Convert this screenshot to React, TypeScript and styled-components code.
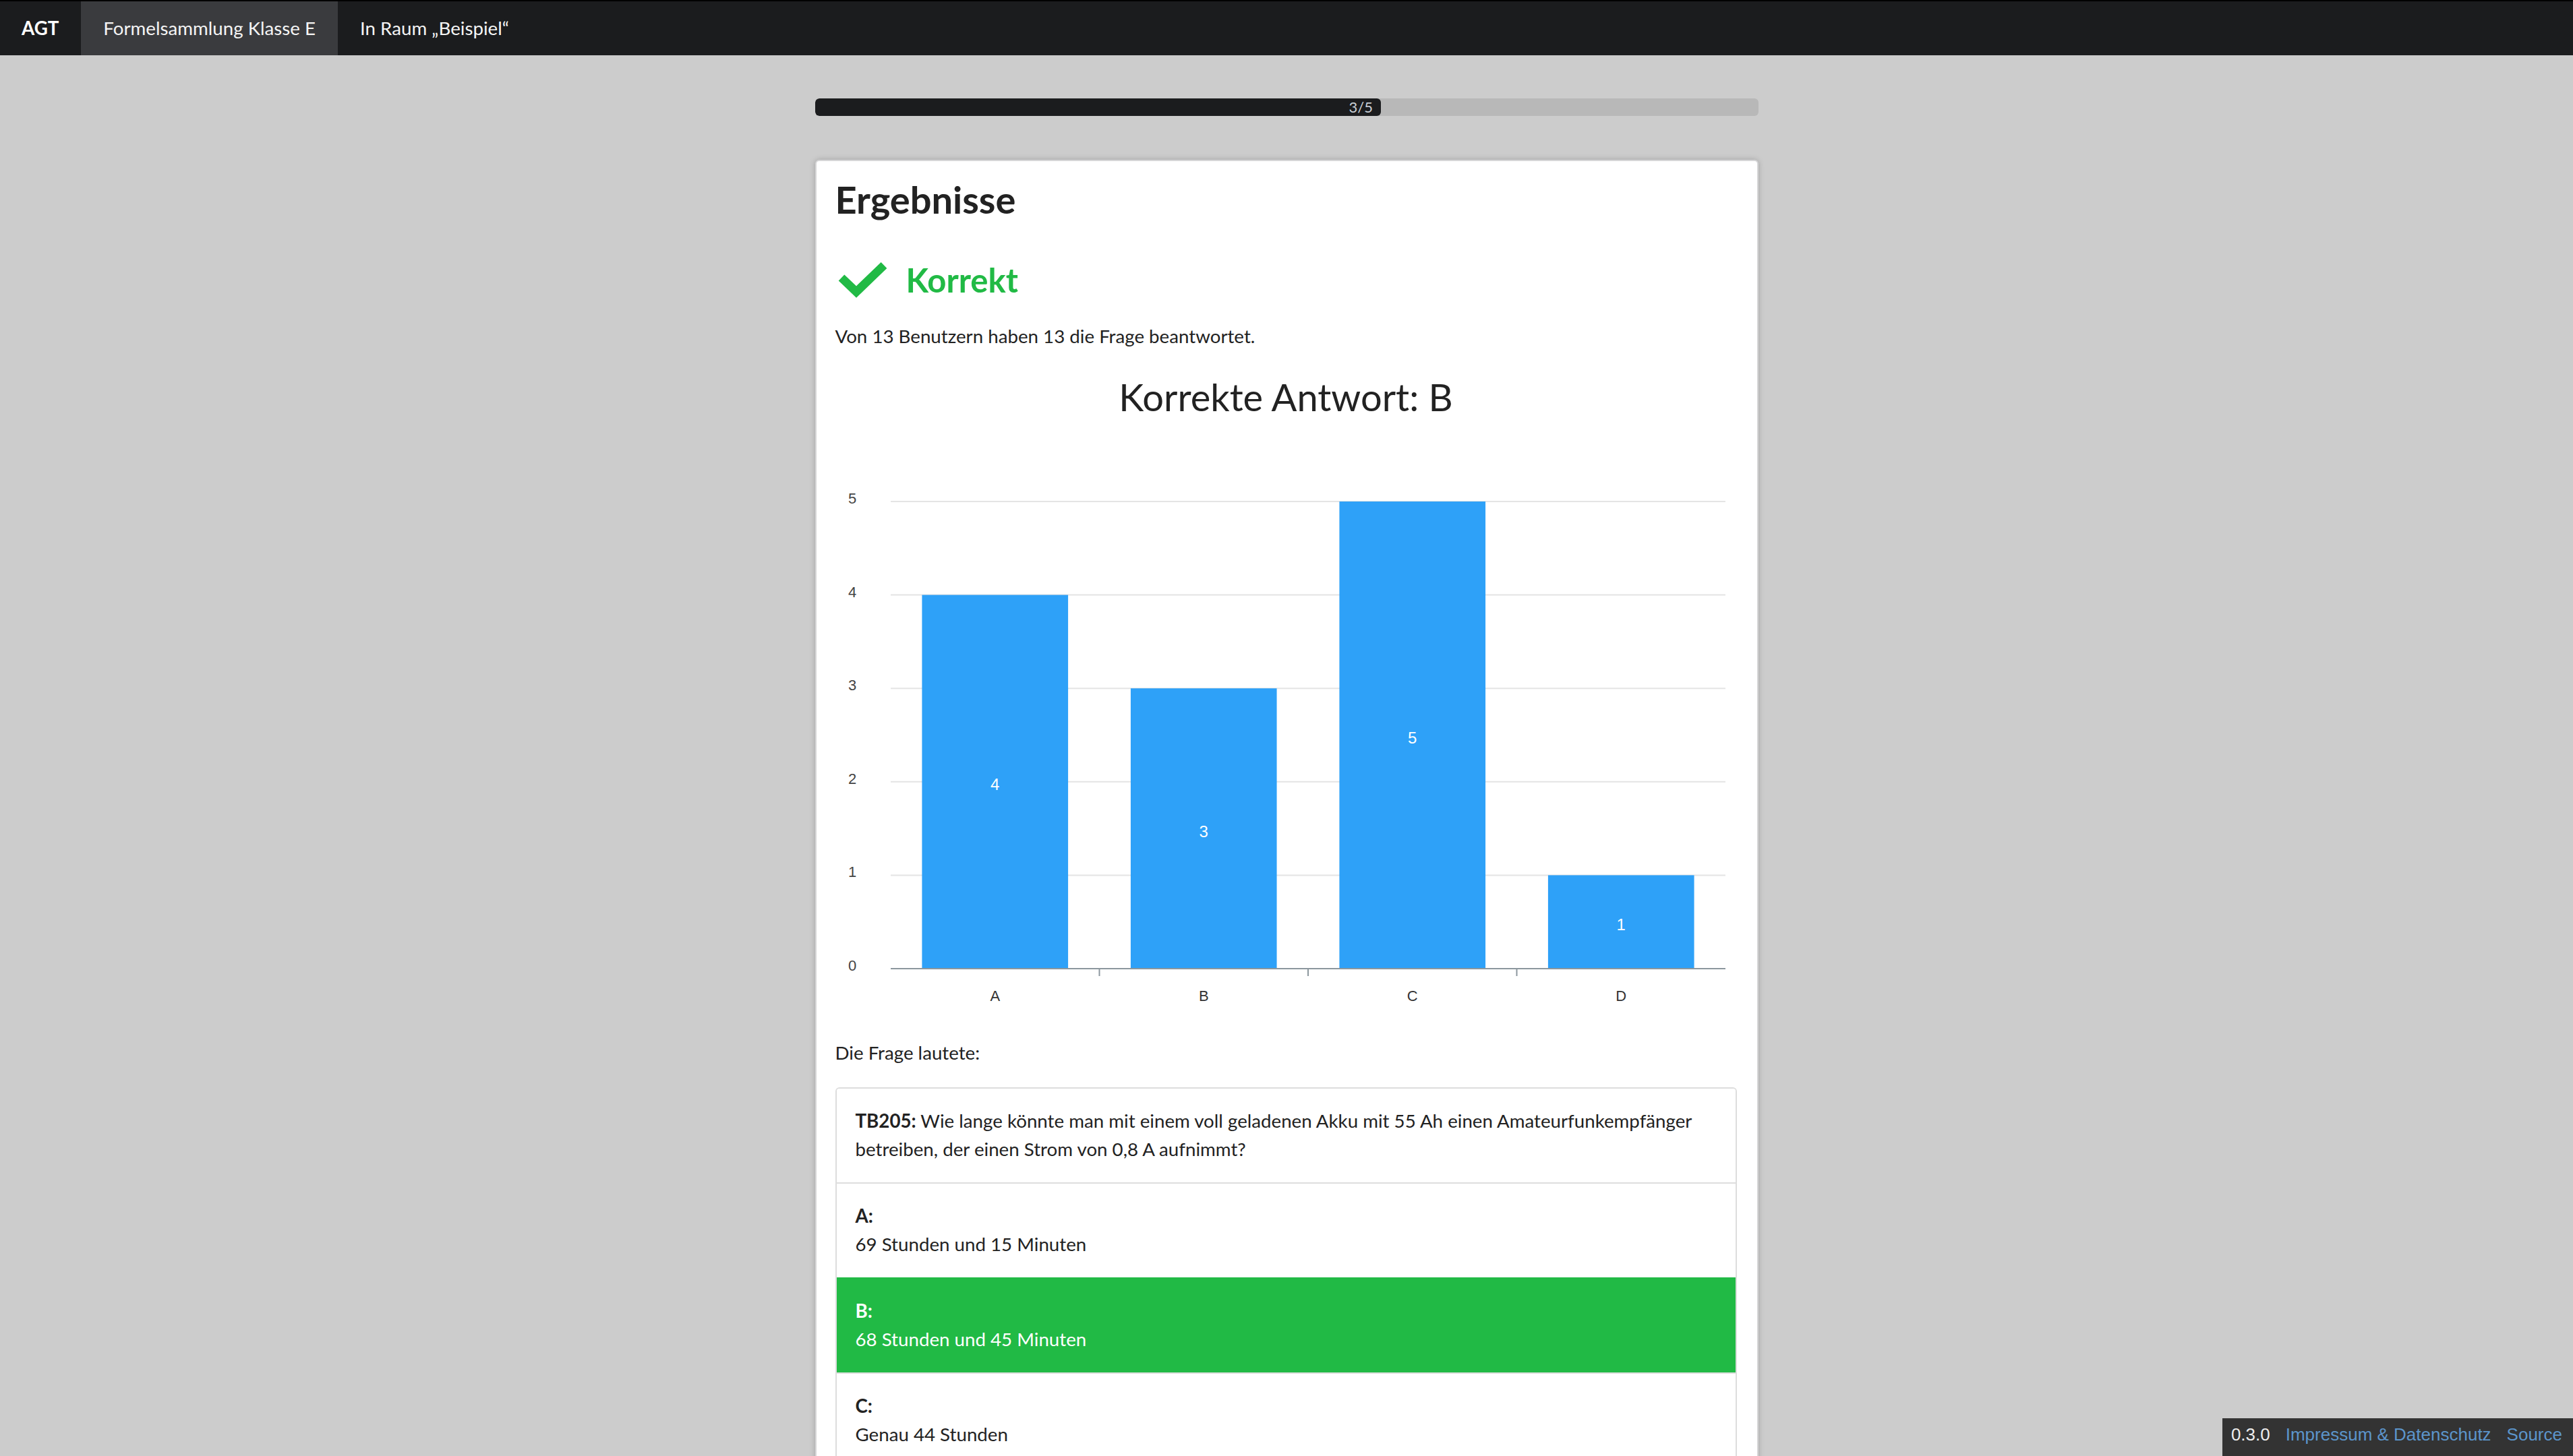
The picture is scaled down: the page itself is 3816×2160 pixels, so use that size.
import React from 'react';
import styled, { createGlobalStyle } from 'styled-components';

const GlobalStyle = createGlobalStyle`
  html, body { margin: 0; padding: 0; background: #cccccc; }
  body {
    font-family: Lato, "Open Sans", "Noto Sans", sans-serif;
    color: #222222;
    font-size: 27.7px;
    line-height: 1.5;
  }
  * { box-sizing: border-box; }
`;

const Nav = styled.nav`
  display: flex;
  align-items: stretch;
  height: 82px;
  background: #1b1c1e;
  border-top: 2px solid #000000;
`;

const Brand = styled.a`
  display: flex;
  align-items: center;
  padding: 0 33px 0 32px;
  color: #ffffff;
  font-weight: 700;
  font-size: 27.7px;
  text-decoration: none;
`;

const NavItem = styled.a<{ $active?: boolean }>`
  display: flex;
  align-items: center;
  padding: 0 33px;
  font-size: 27.7px;
  color: #f4f4f4;
  text-decoration: none;
  background: ${(p) => (p.$active ? '#3a3b3e' : 'transparent')};
`;

const Main = styled.main`
  width: 1399px;
  margin: 64px auto 0;
`;

const Progress = styled.div`
  height: 26px;
  background: #b8b8b8;
  border-radius: 6px;
  overflow: hidden;
  display: flex;
`;

const ProgressFill = styled.div`
  height: 100%;
  background: #1b1c1e;
  border-radius: 6px;
  color: #c9cfd6;
  font-size: 22px;
  line-height: 26px;
  text-align: right;
  padding-right: 12px;
`;

const Card = styled.section`
  margin-top: 65px;
  background: #ffffff;
  border: 2px solid #d6d6d7;
  border-radius: 6px;
  box-shadow: 0 0 8px rgba(0, 0, 0, 0.22);
  padding: 23px 30px 60px 28px;
`;

const Heading = styled.h2`
  margin: 0;
  font-size: 56px;
  font-weight: 700;
  line-height: 67.2px;
`;

const ResultRow = styled.div`
  display: flex;
  align-items: center;
  gap: 25px;
  margin-top: 55px;
`;

const ResultText = styled.h3`
  margin: 0;
  font-size: 49px;
  font-weight: 700;
  line-height: 58.8px;
  color: #21ba45;
`;

const Info = styled.p`
  margin: 32px 0 0;
  line-height: 42px;
`;

const ChartTitle = styled.h3`
  margin: 34.5px 0 0;
  font-size: 56px;
  font-weight: 400;
  line-height: 67.2px;
  text-align: center;
  color: #222222;
`;

const ChartSvg = styled.svg`
  display: block;
  margin-bottom: 42px;
  font-family: "Liberation Sans", Arial, sans-serif;
`;

const Label = styled.p`
  margin: 0;
  line-height: 42px;
`;

const QuestionBox = styled.div`
  margin-top: 30px;
  border: 2px solid #dddddd;
  border-radius: 6px;
  overflow: hidden;
`;

const QRow = styled.div<{ $correct?: boolean }>`
  padding: 27px 28px 28px;
  line-height: 42px;
  background: ${(p) => (p.$correct ? '#21ba45' : '#ffffff')};
  color: ${(p) => (p.$correct ? '#ffffff' : '#222222')};
  &:not(:first-child) {
    border-top: 2px solid ${(p) => (p.$correct ? '#21ba45' : '#dddddd')};
  }
`;

const Strong = styled.strong`
  font-weight: 700;
`;

const AnswerKey = styled.div`
  font-weight: 700;
`;

const Footer = styled.footer`
  position: fixed;
  right: 0;
  bottom: 0;
  height: 56px;
  display: flex;
  gap: 23px;
  background: #333333;
  padding: 0 16px 8px 13px;
  font-family: "Liberation Sans", Arial, sans-serif;
  font-size: 26px;
  line-height: 48px;
`;

const Version = styled.span`
  color: #eeeeee;
`;

const FooterLink = styled.a`
  color: #5c95cb;
  text-decoration: none;
`;

const CheckIcon = () => (
  <svg width="80" height="62" viewBox="0 0 80 62">
    <polyline
      points="9,28 31,49 72,9.5"
      fill="none"
      stroke="#21ba45"
      strokeWidth="12.5"
      strokeLinejoin="miter"
      strokeLinecap="butt"
    />
  </svg>
);

const data = [
  { label: 'A', value: 4 },
  { label: 'B', value: 3 },
  { label: 'C', value: 5 },
  { label: 'D', value: 1 },
];

const W = 1337;
const H = 877;
const PL = 82;
const PR = 1320;
const AXIS = 815;
const UNIT = 138.6;
const MAX = 5;

const BarChart = () => {
  const slot = (PR - PL) / data.length;
  const barW = slot * 0.7;
  const ticks = Array.from({ length: MAX + 1 }, (_, i) => i);
  return (
    <ChartSvg width={W} height={H} viewBox={`0 0 ${W} ${H}`}>
      {ticks.slice(1).map((v) => (
        <line key={v} x1={PL} x2={PR} y1={AXIS - v * UNIT} y2={AXIS - v * UNIT} stroke="#e4e4e4" strokeWidth="2" />
      ))}
      {ticks.map((v) => (
        <text key={v} x={25} y={AXIS - v * UNIT + 3} fontSize="22" fill="#444" textAnchor="middle">
          {v}
        </text>
      ))}
      {data.map((d, i) => {
        const cx = PL + slot * (i + 0.5);
        const top = AXIS - d.value * UNIT;
        return (
          <g key={d.label}>
            <rect x={cx - barW / 2} y={top} width={barW} height={AXIS - top} fill="#279ef8" fillOpacity="0.97" />
            <text x={cx} y={(top + AXIS) / 2 + 12.5} fontSize="24" fill="#ffffff" textAnchor="middle">
              {d.value}
            </text>
            <text x={cx} y={863} fontSize="22" fill="#333" textAnchor="middle">
              {d.label}
            </text>
          </g>
        );
      })}
      <line x1={PL} x2={PR} y1={AXIS} y2={AXIS} stroke="#8c979e" strokeWidth="2" />
      {data.slice(1).map((d, i) => (
        <line key={d.label} x1={PL + slot * (i + 1)} x2={PL + slot * (i + 1)} y1={AXIS} y2={AXIS + 11} stroke="#8c979e" strokeWidth="2" />
      ))}
    </ChartSvg>
  );
};

const answers = [
  { key: 'A', text: '69 Stunden und 15 Minuten', correct: false },
  { key: 'B', text: '68 Stunden und 45 Minuten', correct: true },
  { key: 'C', text: 'Genau 44 Stunden', correct: false },
  { key: 'D', text: 'Etwa 4,4 Stunden', correct: false },
];

export default function App() {
  const progress = (3 / 5) * 100;
  return (
    <>
      <GlobalStyle />
      <Nav>
        <Brand href="#">AGT</Brand>
        <NavItem href="#" $active>
          Formelsammlung Klasse E
        </NavItem>
        <NavItem href="#">In Raum „Beispiel“</NavItem>
      </Nav>
      <Main>
        <Progress>
          <ProgressFill style={{ width: `${progress}%` }}>3/5</ProgressFill>
        </Progress>
        <Card>
          <Heading>Ergebnisse</Heading>
          <ResultRow>
            <CheckIcon />
            <ResultText>Korrekt</ResultText>
          </ResultRow>
          <Info>Von 13 Benutzern haben 13 die Frage beantwortet.</Info>
          <ChartTitle>Korrekte Antwort: B</ChartTitle>
          <BarChart />
          <Label>Die Frage lautete:</Label>
          <QuestionBox>
            <QRow>
              <Strong>TB205:</Strong> Wie lange könnte man mit einem voll geladenen Akku mit 55 Ah einen
              Amateurfunkempfänger betreiben, der einen Strom von 0,8 A aufnimmt?
            </QRow>
            {answers.map((a) => (
              <QRow key={a.key} $correct={a.correct}>
                <AnswerKey>{a.key}:</AnswerKey>
                <div>{a.text}</div>
              </QRow>
            ))}
          </QuestionBox>
        </Card>
      </Main>
      <Footer>
        <Version>0.3.0</Version>
        <FooterLink href="#">Impressum &amp; Datenschutz</FooterLink>
        <FooterLink href="#">Source</FooterLink>
      </Footer>
    </>
  );
}
